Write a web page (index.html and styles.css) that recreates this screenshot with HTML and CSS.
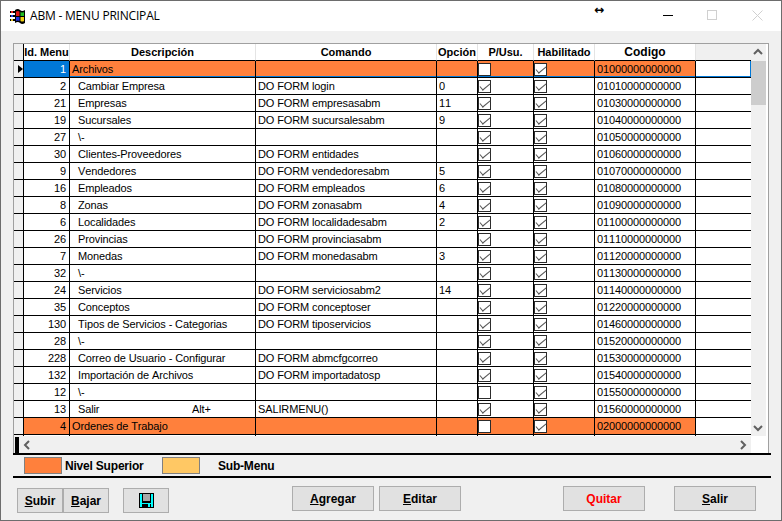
FILE: index.html
```html
<!DOCTYPE html>
<html lang="es">
<head>
  <meta charset="UTF-8">
  <title>ABM - MENU PRINCIPAL</title>
  <link rel="stylesheet" href="styles.css">
</head>
<body>
<div class="window">

  <div class="titlebar">
    <svg class="app-icon" width="18" height="16" viewBox="0 0 18 16">
      <path d="M1 3h5v2H1zM1 7h5v2H1zM1 11h5v2H1z" fill="#000"/>
      <path d="M2 3h2v2H2z" fill="#e02020"/>
      <path d="M2 7h2v2H2z" fill="#2040e0"/>
      <path d="M2 11h2v2H2z" fill="#e0c020"/>
      <path d="M6 2q3-2 5 0t5 0v13q-3 2-5 0t-5 0z" fill="#000"/>
      <path d="M7 3.500q2-1 3.500 0v4.500H7z" fill="#e01818"/>
      <path d="M11.500 4q2 1 3.500 0v4h-3.500z" fill="#20c020"/>
      <path d="M7 9h3.500v4q-1.500-1-3.500 0z" fill="#2030e0"/>
      <path d="M11.500 9H15v4q-1.500 1-3.500 0z" fill="#f0d010"/>
    </svg>
    <span class="title-text">ABM - MENU PRINCIPAL</span>
    <span class="resize-cursor">↔</span>
    <span class="win-btn min"></span>
    <span class="win-btn max"></span>
    <svg class="win-close" width="11" height="11" viewBox="0 0 11 11"><path d="M0.500 0.500l10 10M10.500 0.500l-10 10" stroke="#d0d0d0" fill="none"/></svg>
  </div>

  <div class="grid-frame">
    <div class="table-wrap">
      <table class="menu-table">
        <colgroup>
          <col class="c-mark"><col class="c-id"><col class="c-desc"><col class="c-cmd"><col class="c-opt"><col class="c-pu"><col class="c-hab"><col class="c-code"><col class="c-rest">
        </colgroup>
        <thead>
          <tr>
            <th class="mark"></th><th>Id. Menu</th><th>Descripción</th><th>Comando</th><th>Opción</th><th>P/Usu.</th><th>Habilitado</th><th class="code-head">Codigo</th><th class="empty"></th>
          </tr>
        </thead>
        <tbody>
          <tr class="top sel"><td class="mark"><span class="pointer"></span></td><td class="num">1</td><td>Archivos</td><td></td><td></td><td><i class="chk"></i></td><td><i class="chk on"></i></td><td>01000000000000</td><td></td></tr>
          <tr><td class="mark"></td><td class="num">2</td><td class="sub">Cambiar Empresa</td><td>DO FORM login</td><td>0</td><td><i class="chk on"></i></td><td><i class="chk on"></i></td><td>01010000000000</td><td></td></tr>
          <tr><td class="mark"></td><td class="num">21</td><td class="sub">Empresas</td><td>DO FORM empresasabm</td><td>11</td><td><i class="chk on"></i></td><td><i class="chk on"></i></td><td>01030000000000</td><td></td></tr>
          <tr><td class="mark"></td><td class="num">19</td><td class="sub">Sucursales</td><td>DO FORM sucursalesabm</td><td>9</td><td><i class="chk on"></i></td><td><i class="chk on"></i></td><td>01040000000000</td><td></td></tr>
          <tr><td class="mark"></td><td class="num">27</td><td class="sub">\-</td><td></td><td></td><td><i class="chk on"></i></td><td><i class="chk on"></i></td><td>01050000000000</td><td></td></tr>
          <tr><td class="mark"></td><td class="num">30</td><td class="sub">Clientes-Proveedores</td><td>DO FORM entidades</td><td></td><td><i class="chk on"></i></td><td><i class="chk on"></i></td><td>01060000000000</td><td></td></tr>
          <tr><td class="mark"></td><td class="num">9</td><td class="sub">Vendedores</td><td>DO FORM vendedoresabm</td><td>5</td><td><i class="chk on"></i></td><td><i class="chk on"></i></td><td>01070000000000</td><td></td></tr>
          <tr><td class="mark"></td><td class="num">16</td><td class="sub">Empleados</td><td>DO FORM empleados</td><td>6</td><td><i class="chk on"></i></td><td><i class="chk on"></i></td><td>01080000000000</td><td></td></tr>
          <tr><td class="mark"></td><td class="num">8</td><td class="sub">Zonas</td><td>DO FORM zonasabm</td><td>4</td><td><i class="chk on"></i></td><td><i class="chk on"></i></td><td>01090000000000</td><td></td></tr>
          <tr><td class="mark"></td><td class="num">6</td><td class="sub">Localidades</td><td>DO FORM localidadesabm</td><td>2</td><td><i class="chk on"></i></td><td><i class="chk on"></i></td><td>01100000000000</td><td></td></tr>
          <tr><td class="mark"></td><td class="num">26</td><td class="sub">Provincias</td><td>DO FORM provinciasabm</td><td></td><td><i class="chk on"></i></td><td><i class="chk on"></i></td><td>01110000000000</td><td></td></tr>
          <tr><td class="mark"></td><td class="num">7</td><td class="sub">Monedas</td><td>DO FORM monedasabm</td><td>3</td><td><i class="chk on"></i></td><td><i class="chk on"></i></td><td>01120000000000</td><td></td></tr>
          <tr><td class="mark"></td><td class="num">32</td><td class="sub">\-</td><td></td><td></td><td><i class="chk on"></i></td><td><i class="chk on"></i></td><td>01130000000000</td><td></td></tr>
          <tr><td class="mark"></td><td class="num">24</td><td class="sub">Servicios</td><td>DO FORM serviciosabm2</td><td>14</td><td><i class="chk on"></i></td><td><i class="chk on"></i></td><td>01140000000000</td><td></td></tr>
          <tr><td class="mark"></td><td class="num">35</td><td class="sub">Conceptos</td><td>DO FORM conceptoser</td><td></td><td><i class="chk on"></i></td><td><i class="chk on"></i></td><td>01220000000000</td><td></td></tr>
          <tr><td class="mark"></td><td class="num">130</td><td class="sub">Tipos de Servicios - Categorias</td><td>DO FORM tiposervicios</td><td></td><td><i class="chk on"></i></td><td><i class="chk on"></i></td><td>01460000000000</td><td></td></tr>
          <tr><td class="mark"></td><td class="num">28</td><td class="sub">\-</td><td></td><td></td><td><i class="chk on"></i></td><td><i class="chk on"></i></td><td>01520000000000</td><td></td></tr>
          <tr><td class="mark"></td><td class="num">228</td><td class="sub">Correo de Usuario - Configurar</td><td>DO FORM abmcfgcorreo</td><td></td><td><i class="chk on"></i></td><td><i class="chk on"></i></td><td>01530000000000</td><td></td></tr>
          <tr><td class="mark"></td><td class="num">132</td><td class="sub">Importación de Archivos</td><td>DO FORM importadatosp</td><td></td><td><i class="chk on"></i></td><td><i class="chk on"></i></td><td>01540000000000</td><td></td></tr>
          <tr><td class="mark"></td><td class="num">12</td><td class="sub">\-</td><td></td><td></td><td><i class="chk"></i></td><td><i class="chk on"></i></td><td>01550000000000</td><td></td></tr>
          <tr><td class="mark"></td><td class="num">13</td><td class="sub"><span class="with-key">Salir</span>Alt+</td><td>SALIRMENU()</td><td></td><td><i class="chk on"></i></td><td><i class="chk on"></i></td><td>01560000000000</td><td></td></tr>
          <tr class="top"><td class="mark"></td><td class="num">4</td><td>Ordenes de Trabajo</td><td></td><td></td><td><i class="chk"></i></td><td><i class="chk on"></i></td><td>02000000000000</td><td></td></tr>
          <tr class="stub"><td class="mark"></td><td></td><td></td><td></td><td></td><td></td><td></td><td></td><td></td></tr>
        </tbody>
      </table>
    </div>

    <div class="vbar">
      <svg class="arrow" width="16" height="16" viewBox="0 0 16 16"><path d="M4 10l4-4 4 4" stroke="#606060" stroke-width="2" fill="none"/></svg>
      <div class="vthumb"></div>
      <svg class="arrow arrow-end" width="16" height="16" viewBox="0 0 16 16"><path d="M4 6l4 4 4-4" stroke="#606060" stroke-width="2" fill="none"/></svg>
    </div>

    <div class="hbar">
      <span class="hstub"></span>
      <svg class="arrow" width="16" height="16" viewBox="0 0 16 16"><path d="M10 4l-4 4 4 4" stroke="#606060" stroke-width="2" fill="none"/></svg>
      <svg class="arrow arrow-end" width="16" height="16" viewBox="0 0 16 16"><path d="M6 4l4 4-4 4" stroke="#606060" stroke-width="2" fill="none"/></svg>
    </div>
    <div class="corner"></div>
  </div>

  <div class="legend">
    <span class="swatch top-level"></span>
    <span class="legend-label">Nivel Superior</span>
    <span class="swatch sub-level"></span>
    <span class="legend-label sub-label">Sub-Menu</span>
  </div>

  <div class="actions">
    <div class="left-actions">
      <button class="btn small"><u>S</u>ubir</button>
      <button class="btn small"><u>B</u>ajar</button>
      <button class="btn small save" aria-label="Guardar">
        <svg width="15" height="15" viewBox="0 0 15 15">
          <path d="M0 0h15v15H0z" fill="#000"/>
          <path d="M1 1h2v13H1zM12 1h2v13h-2zM3 10h9v1H3z" fill="#00ffff"/>
          <path d="M4 1h7v7H4z" fill="#a8a8a8"/>
          <path d="M9 11h2v3H9z" fill="#00ffff"/>
        </svg>
      </button>
    </div>
    <button class="btn wide agregar"><u>A</u>gregar</button>
    <button class="btn wide editar"><u>E</u>ditar</button>
    <button class="btn wide quitar">Quitar</button>
    <button class="btn wide salir"><u>S</u>alir</button>
  </div>

</div>
</body>
</html>
```

FILE: styles.css
```css
* {
  box-sizing: border-box;
}

html, body {
  margin: 0;
  padding: 0;
}

body {
  font-family: "Liberation Sans", Arial, sans-serif;
  font-size: 11px;
  color: #000;
}

.window {
  width: 782px;
  height: 521px;
  background: #f0f0f0;
  border: 1px solid #6d6d6d;
  overflow: hidden;
}

/* title bar */
.titlebar {
  height: 30px;
  background: #fff;
  display: flex;
  align-items: center;
}

.app-icon {
  margin-left: 8px;
}

.title-text {
  margin-left: 3px;
  margin-top: -2px;
  font-family: "Open Sans", "Noto Sans", sans-serif;
  font-size: 12px;
  letter-spacing: -0.2px;
}

.resize-cursor {
  position: absolute;
  left: 594px;
  top: 3px;
  font-family: "DejaVu Sans", sans-serif;
  font-size: 12px;
  font-weight: bold;
}

.win-btn {
  position: absolute;
  top: 15px;
}

.win-btn.min {
  left: 663px;
  width: 10px;
  height: 1px;
  background: #000;
}

.win-btn.max {
  left: 707px;
  top: 10px;
  width: 10px;
  height: 10px;
  border: 1px solid #d0d0d0;
}

.win-close {
  position: absolute;
  left: 752px;
  top: 10px;
}

/* grid */
.grid-frame {
  margin: 12px 0 0 12px;
  width: 756px;
  height: 410px;
  background: #f0f0f0;
  border: 1px solid #a0a0a0;
  border-bottom: none;
  display: grid;
  grid-template-columns: 737px 17px;
  grid-template-rows: 392px 17px;
}

.table-wrap {
  overflow: hidden;
  background: #fff;
}

.menu-table {
  table-layout: fixed;
  width: 737px;
  border-collapse: separate;
  border-spacing: 0;
}

.c-mark { width: 10px; }
.c-id { width: 46px; }
.c-desc { width: 186px; }
.c-cmd { width: 181px; }
.c-opt { width: 41px; }
.c-pu { width: 56px; }
.c-hab { width: 61px; }
.c-code { width: 101px; }
.c-rest { width: 55px; }

.menu-table th {
  height: 17px;
  padding: 0;
  font-size: 11px;
  font-weight: bold;
  text-align: center;
  white-space: nowrap;
  overflow: hidden;
  background: #fff;
  border-right: 1px solid #e4e4e4;
  border-bottom: 1px solid #000;
}

.menu-table th.code-head {
  font-size: 12px;
}

.menu-table th.mark {
  background: #f0f0f0;
  border-right: 1px solid #000;
}

.menu-table th.empty {
  background: #f0f0f0;
  border-right: none;
}

.menu-table td {
  height: 17px;
  padding: 0 2px;
  letter-spacing: -0.12px;
  font-kerning: none;
  white-space: nowrap;
  overflow: hidden;
  background: #fff;
  border-right: 1px solid #000;
  border-bottom: 1px solid #000;
}

.menu-table td:last-child {
  border-right: none;
}

.menu-table td.mark {
  padding: 0;
  background: #f0f0f0;
  position: relative;
}

.menu-table td.num {
  text-align: right;
  padding-right: 3px;
}

.menu-table td.sub {
  padding-left: 8px;
}

.with-key {
  display: inline-block;
  width: 114px;
}

tr.top td {
  background: #ff803c;
}

tr.top td.mark {
  background: #f0f0f0;
}

tr.top td:last-child {
  background: #fff;
}

tr.sel td {
  box-shadow: inset 0 -1px 0 #0078d7;
}

tr.sel td.num {
  background: #0078d7;
  color: #fff;
}

tr.sel td.mark {
  box-shadow: none;
}

tr.sel td:last-child {
  box-shadow: inset -1px -1px 0 #0078d7;
}

.menu-table tr.stub td {
  height: 2px;
  padding: 0;
  font-size: 0;
  border-bottom: none;
}

.pointer {
  position: absolute;
  left: 4px;
  top: 4px;
  border-left: 5px solid #000;
  border-top: 4px solid transparent;
  border-bottom: 4px solid transparent;
}

/* checkboxes sit at the left edge of the cell */
.menu-table td:nth-child(6),
.menu-table td:nth-child(7) {
  padding: 0;
}

.chk {
  display: block;
  position: relative;
  width: 13px;
  height: 13px;
  margin-top: 1px;
  background: #fff;
  border: 1px solid #2c2c2c;
}

.chk.on::after {
  content: "";
  position: absolute;
  left: 1px;
  top: 2px;
  width: 9px;
  height: 4px;
  border-left: 1.5px solid #555;
  border-bottom: 1.5px solid #555;
  transform: rotate(-40deg);
}

/* scrollbars */
.vbar {
  display: flex;
  flex-direction: column;
  background: #f0f0f0;
  border-right: 2px solid #fff;
}

.arrow {
  flex: none;
}

.vbar .arrow {
  margin-left: -1px;
}

.arrow-end {
  margin-top: auto;
}

.vthumb {
  height: 44px;
  margin-top: 1px;
  background: #cdcdcd;
}

.hbar {
  display: flex;
  align-items: center;
  background: #f0f0f0;
}

.hbar .arrow-end {
  margin-top: 0;
  margin-left: auto;
}

.hstub {
  width: 4px;
  height: 16px;
  margin-left: 1px;
  background: #000;
}

.corner {
  background: #fff;
}

/* legend */
.legend {
  margin-left: 12px;
  width: 758px;
  height: 25px;
  padding-left: 11px;
  border-top: 2px solid #000;
  border-bottom: 2px solid #000;
  display: flex;
  align-items: center;
  font-size: 12px;
  font-weight: bold;
}

.swatch {
  width: 38px;
  height: 17px;
  border: 1px solid #808080;
}

.swatch.top-level {
  background: #ff803c;
}

.swatch.sub-level {
  background: #ffc864;
}

.legend-label {
  margin-left: 3px;
  width: 97px;
  letter-spacing: -0.2px;
}

.legend-label.sub-label {
  margin-left: 18px;
}

/* buttons */
.actions {
  padding: 8px 0 0 16px;
  display: flex;
  align-items: flex-start;
}

.left-actions {
  display: flex;
  margin-top: 2px;
}

.btn {
  height: 25px;
  padding: 0;
  background: #e1e1e1;
  border: 1px solid #adadad;
  font-family: "Liberation Sans", Arial, sans-serif;
  font-size: 12px;
  font-weight: bold;
  color: #000;
}

.btn.small {
  width: 46px;
}

.btn.save {
  margin-left: 14px;
  padding-top: 2px;
}

.btn.wide {
  width: 82px;
}

.agregar { margin-left: 123px; }
.editar { margin-left: 5px; }
.quitar { margin-left: 102px; color: #ff0000; }
.salir { margin-left: 29px; }
```
